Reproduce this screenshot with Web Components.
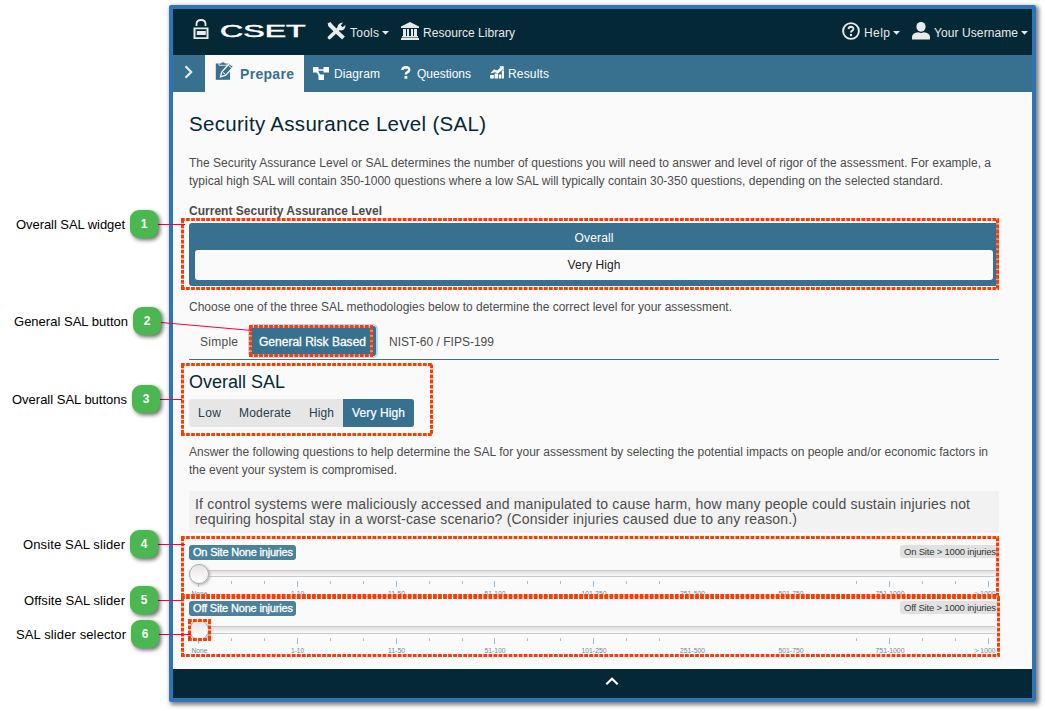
<!DOCTYPE html>
<html lang="en">
<head>
<meta charset="utf-8">
<title>Security Assurance Level</title>
<style>
html,body{margin:0;padding:0;background:#fff;overflow:hidden}
body{width:1045px;height:711px;position:relative;font:12px/18px "Liberation Sans",Arial,sans-serif;color:#4c4c4c}
</style>
</head>
<body>
<help-figure></help-figure>
<script>
const define=(name,html,ready)=>customElements.define(name,class extends HTMLElement{
  constructor(){
    super();
    const t=document.createElement('template');
    t.innerHTML=html;
    this.attachShadow({mode:'open'}).append(t.content.cloneNode(true));
  }
  connectedCallback(){if(ready)ready(this,this.shadowRoot)}
});

/* One line of text, tracked to a given width (w). */
define('fit-text',`<style>:host{display:inline-block;white-space:nowrap;flex:none}span{display:inline-block}</style><span><slot></slot></span>`,(el,root)=>{
  const w=+el.getAttribute('w'),s=root.querySelector('span');
  const n=el.textContent.length-1;
  el.style.width=w+'px';
  if(n>0)s.style.letterSpacing=((w-s.getBoundingClientRect().width)/n)+'px';
});

const icons={
lock:[16,21,`<path d="M3.500 7V5Q3.500 1 8 1T12.500 5V7" fill="none" stroke="currentColor" stroke-width="1.800"/><path fill-rule="evenodd" d="M.5 8.500H15.500V20H.5ZM2.500 10.300V18.200H13.500V10.300Z" fill="currentColor"/><path d="M3.800 12H12.800V16H3.800Z" fill="currentColor"/>`],
tools:[19,18,`<path d="M3 3L9 9" stroke="currentColor" stroke-width="4" stroke-linecap="round"/><path d="M.5 1.500L3.500 0 6 4 3 5.500Z" fill="currentColor"/><path d="M10 10L16.500 16" stroke="currentColor" stroke-width="4"/><path d="M2.500 15.500L13 5.500" stroke="currentColor" stroke-width="3.600" stroke-linecap="round"/><path d="M16 .6L13.800 3.600 15.400 5.200 18.400 3Q18.600 8 14.200 8.400 10.800 8 10.400 5.500 10.800 1 16 .6Z" fill="currentColor"/>`],
museum:[18,18,`<path d="M9 0L18 4.500V6H0V4.500ZM2 7H5V14H2ZM6 7H8V14H6ZM10 7H12V14H10ZM13 7H16V14H13ZM1 14H17V15.500H1ZM0 16H18V18H0Z" fill="currentColor"/>`],
help:[18,18,`<circle cx="9" cy="9" r="7.900" fill="none" stroke="currentColor" stroke-width="1.900"/><path d="M6.500 7Q6.800 4.800 9 4.800 11.500 4.900 11.400 7 11.300 8.100 10 8.800 9 9.300 9 10.600" fill="none" stroke="currentColor" stroke-width="1.900"/><circle cx="9" cy="13" r="1.200" fill="currentColor"/>`],
user:[18,18,`<ellipse cx="9" cy="4.800" rx="4.600" ry="4.900" fill="currentColor"/><path d="M0 17.500V15Q0 11 6.500 10.300 9 11.800 11.500 10.300 18 11 18 15V17.500Z" fill="currentColor"/>`],
caret:[7,4,`<path d="M0 0H7L3.500 3.700Z" fill="currentColor"/>`],
right:[9,14,`<path d="M1.500 1.300L7.200 7 1.500 12.700" fill="none" stroke="currentColor" stroke-width="2.200"/>`],
up:[14,9,`<path d="M1.300 7.300L7 1.800 12.700 7.300" fill="none" stroke="currentColor" stroke-width="2.200"/>`],
prepare:[20,20,`<path d="M.8 2.500H15V18.800H.8Z" fill="currentColor"/><path d="M4 4.300V2H6Q8 -.5 10 2H12V4.300Z" fill="currentColor" stroke="#fafafa" stroke-width=".8"/><path d="M5.500 15.800L6.700 11 14.500 2.500 18.500 5.600 10.800 14.200Z" fill="currentColor" stroke="#fafafa" stroke-width="1.300"/><path d="M7.800 11.300L10.400 13.400M13.200 4L16.800 7.200" stroke="#fafafa" stroke-width="1"/>`],
diagram:[16,14,`<path d="M3 3H13M3 3L8.500 11" stroke="currentColor" stroke-width="1.700"/><path d="M0 0H5.500V5.500H0ZM10.500 0H16V5.500H10.500ZM5.500 7.500H11V13H5.500Z" fill="currentColor"/>`],
question:[10,13,`<path d="M1.300 4Q1.500 1.200 4.900 1.200 8.400 1.300 8.200 4 8 5.600 6.200 6.300 4.900 7 4.900 8.500" fill="none" stroke="currentColor" stroke-width="2.400"/><path d="M3.500 10H6.300V12.700H3.500Z" fill="currentColor"/>`],
results:[15,13,`<path d="M0 9H3.800V12.500H0ZM4.600 7.500H8V12.500H4.600ZM8.800 8.500H11.200V12.500H8.800ZM11.800 4.500H14V12.500H11.800Z" fill="currentColor"/><path d="M.3 7.500L4 3.200 7.200 4.500 10.500 1.500 9.500 .3H13.800V4.500L12.500 3.500 8 7.600 5 6.300Z" fill="currentColor"/>`]
};
define('ui-icon',`<style>:host{display:block;flex:none}svg{display:block}</style><div></div>`,(el,root)=>{
  const [w,h,p]=icons[el.getAttribute('name')];
  root.querySelector('div').innerHTML=`<svg width="${w}" height="${h}" viewBox="0 0 ${w} ${h}">${p}</svg>`;
});

define('top-bar',`<style>
:host{display:flex;height:46px;background:#052837;color:#e9eaea;box-sizing:border-box;padding:0 4px 0 20px;align-items:flex-start}
ui-icon{margin-top:13px}
fit-text{margin-top:15px}
.caret{margin-top:22px}
.brand{width:87px;height:14px;margin:16px 21px 0 11px;overflow:visible}
.brand span{display:block;font:400 17px/14px "Liberation Sans",sans-serif;transform-origin:0 50%;transform:scaleX(1.89);width:46px;color:#fff;-webkit-text-stroke:.5px #fff}
.gap{flex:1}
</style>
<ui-icon name="lock" style="margin-top:10px"></ui-icon><div class="brand"><span>CSET</span></div>
<ui-icon name="tools" style="margin-left:-1px"></ui-icon><fit-text w="29" style="margin-left:4px">Tools</fit-text><ui-icon class="caret" name="caret" style="margin-left:3px"></ui-icon>
<ui-icon name="museum" style="margin-left:12px"></ui-icon><fit-text w="92" style="margin-left:4px">Resource Library</fit-text>
<div class="gap"></div>
<ui-icon name="help"></ui-icon><fit-text w="26" style="margin-left:4px">Help</fit-text><ui-icon class="caret" name="caret" style="margin-left:3px"></ui-icon>
<ui-icon name="user" style="margin-left:12px"></ui-icon><fit-text w="84" style="margin-left:4px">Your Username</fit-text><ui-icon class="caret" name="caret" style="margin-left:3px"></ui-icon>`);

define('nav-bar',`<style>
:host{display:flex;height:37px;background:#38718f;color:#fff;align-items:flex-start}
fit-text{margin-top:10px}
.tab{display:flex;width:99px;height:37px;background:#fafafa;color:#38718f;font-weight:700;font-size:14px}
</style>
<ui-icon name="right" style="margin:10px 12px 0 11px;color:#e9eaea"></ui-icon>
<div class="tab"><ui-icon name="prepare" style="margin:6px 5px 0 10px"></ui-icon><fit-text w="54">Prepare</fit-text></div>
<ui-icon name="diagram" style="margin:12px 5px 0 9px"></ui-icon><fit-text w="46">Diagram</fit-text>
<ui-icon name="question" style="margin:11px 6px 0 21px"></ui-icon><fit-text w="54">Questions</fit-text>
<ui-icon name="results" style="margin:11px 3px 0 19px"></ui-icon><fit-text w="41">Results</fit-text>`);

define('sal-summary',`<style>
:host{display:block;box-sizing:border-box;height:63px;background:#38718f;border-radius:3px;padding:6px;color:#fff;text-align:center}
.value{margin-top:3px;height:30px;line-height:30px;background:#fafafa;border-radius:3px;color:#222}
.name{height:18px}
</style><div class="name"><fit-text w="39">Overall</fit-text></div><div class="value"><slot></slot></div>`);

define('method-tabs',`<style>
:host{display:flex;height:34px;border-bottom:1px solid #38718f;box-sizing:border-box;line-height:32px}
.on{background:#38718f;color:#fff;border-radius:3px;box-shadow:0 0 0 2px #b3d7ff;height:30px;width:126px;box-sizing:border-box;padding-left:9px;margin:0 13px 0 12px;-webkit-text-stroke:.3px #fff}
</style><fit-text w="38" style="margin-left:11px">Simple</fit-text><div class="on"><fit-text w="107">General Risk Based</fit-text></div><fit-text w="105">NIST-60 / FIPS-199</fit-text>`);

define('level-buttons',`<style>
:host{display:flex;width:225px;height:28px;line-height:28px;border-radius:3px;overflow:hidden;background:#e6e6e6;color:#24404e}
.on{background:#38718f;color:#fff;width:71px;box-sizing:border-box;padding-left:9px;margin-left:9px;-webkit-text-stroke:.2px #fff}
</style><fit-text w="23" style="margin-left:9px">Low</fit-text><fit-text w="52" style="margin-left:18px">Moderate</fit-text><fit-text w="25" style="margin-left:18px">High</fit-text><div class="on"><fit-text w="53">Very High</fit-text></div>`);

define('injury-slider',`<style>
:host{display:block;height:56px;position:relative;width:810px}
.tags{display:flex;justify-content:space-between;height:16px;align-items:flex-start}
.now{background:#4a819b;color:#fff;border-radius:3px;height:15px;line-height:15px;width:107px;box-sizing:border-box;padding-left:4px;font-size:11px;-webkit-text-stroke:.3px #fff}
.max{background:#e1e1e1;color:#333;border-radius:3px;height:13px;line-height:13px;width:99px;box-sizing:border-box;padding-left:4px;font-size:9.500px}
.track{height:7px;width:807px;box-sizing:border-box;margin-top:9px;border:1px solid #c8c8c8;border-width:1px 0;border-radius:2px;background:linear-gradient(#dedede,#fafafa)}
:host([tall]) .track{height:8px}
.knob{position:absolute;left:0;top:19px;width:20px;height:20px;box-sizing:border-box;border:1px solid #aaa;border-radius:50%;background:linear-gradient(#e4e4e4,#fff);box-shadow:1px 1px 3px #aaa}
svg{display:block;height:28px;width:810px;overflow:visible;margin-top:-7px}
svg text{font-size:6.500px;text-anchor:middle;fill:#78868e}
</style><div class="tags"><div class="now"></div><div class="max"></div></div><div class="track"></div><svg></svg><div class="knob"></div>`,(el,root)=>{
  const site=el.getAttribute('site');
  root.querySelector('.now').innerHTML=`<fit-text w="100">${site} None injuries</fit-text>`;
  root.querySelector('.max').innerHTML=`<fit-text w="92">${site} &gt; 1000 injuries</fit-text>`;
  const major=[9,108,207,305,404,700,799].map(x=>`<rect x="${x}" y="11" width="1" height="6" fill="#99bfe0"/>`).join('');
  const minor=[42,75,141,174,240,273,338,371,437,470,667,733,766].map(x=>`<rect x="${x}" y="11" width="1" height="3" fill="#bbb"/>`).join('');
  const names=[['None',10.500,16],['1-10',108.500,13],['11-50',207.500,17],['51-100',306,21],['101-250',405,25],['251-500',503.500,25],['501-750',602,25],['751-1000',701,29],['> 1000',796,21]];
  root.querySelector('svg').innerHTML=major+minor+names.map(([s,x,w])=>`<text x="${x}" y="26" textLength="${w}" lengthAdjust="spacingAndGlyphs">${s.replace('>','&gt;')}</text>`).join('');
});

define('sal-form',`<style>
:host{display:block;height:577px;box-sizing:border-box;background:#fafafa;padding:19px 33px 0 16px}
fit-text{display:block}
sal-summary fit-text{display:inline-block}
h1,h2,p{margin:0;font-weight:400}
h1{font-size:20.500px;line-height:26px;color:#052837}
h2{font-size:18px;line-height:22px;color:#052837;margin:11px 0 6px}
.question{height:42px;box-sizing:border-box;padding:6px;background:#f2f2f2;font-size:14px;line-height:15px;margin-top:12px;margin-bottom:12px}
</style>
<h1><fit-text w="297">Security Assurance Level (SAL)</fit-text></h1>
<p style="margin-top:17px"><fit-text w="802">The Security Assurance Level or SAL determines the number of questions you will need to answer and level of rigor of the assessment. For example, a</fit-text><fit-text w="754">typical high SAL will contain 350-1000 questions where a low SAL will typically contain 30-350 questions, depending on the selected standard.</fit-text></p>
<p style="font-weight:700;margin:12px 0 3px"><fit-text w="193">Current Security Assurance Level</fit-text></p>
<sal-summary><fit-text w="53">Very High</fit-text></sal-summary>
<p style="margin:12px 0 10px"><fit-text w="543">Choose one of the three SAL methodologies below to determine the correct level for your assessment.</fit-text></p>
<method-tabs></method-tabs>
<h2><fit-text w="96">Overall SAL</fit-text></h2>
<level-buttons></level-buttons>
<p style="margin-top:16px"><fit-text w="799">Answer the following questions to help determine the SAL for your assessment by selecting the potential impacts on people and/or economic factors in</fit-text><fit-text w="208">the event your system is compromised.</fit-text></p>
<div class="question"><fit-text w="775">If control systems were maliciously accessed and manipulated to cause harm, how many people could sustain injuries not</fit-text><fit-text w="602">requiring hospital stay in a worst-case scenario? (Consider injuries caused due to any reason.)</fit-text></div>
<injury-slider site="On Site"></injury-slider>
<injury-slider site="Off Site" tall></injury-slider>`);

define('app-window',`<style>
:host{display:block;box-sizing:border-box;width:867px;height:697px;border:4px solid #2f75b5;border-radius:2px;box-shadow:2px 2px 4px 1px rgba(0,0,0,.5)}
footer{height:29px;background:#052837;color:#fff;display:flex;justify-content:center;padding:0 0 0 19px;box-sizing:border-box}
ui-icon{margin-top:8px}
</style><top-bar></top-bar><nav-bar></nav-bar><sal-form></sal-form><footer><ui-icon name="up"></ui-icon></footer>`);

define('call-out',`<style>
:host{position:absolute;display:flex;align-items:center;justify-content:flex-end;height:28px;left:0;color:#000;font-size:13px;gap:5px}
b{width:28px;height:28px;border-radius:9px;background:#4bb750;color:#fff;text-align:center;line-height:29px;font-size:12px;box-shadow:2px 2px 4px rgba(0,0,0,.6)}
::slotted(fit-text){padding-top:2px}
</style><slot></slot><b></b>`,(el,root)=>{
  root.querySelector('b').textContent=el.getAttribute('n');
  el.style.top=el.getAttribute('y')+'px';
  el.style.width=el.getAttribute('end')+'px';
});

define('note-layer',`<style>
:host{position:absolute;left:0;top:0;width:1045px;height:711px}
svg{position:absolute;left:0;top:0}
</style><svg width="1045" height="711"></svg>
<call-out n="1" y="210" end="158"><fit-text w="109">Overall SAL widget</fit-text></call-out>
<call-out n="2" y="307" end="161"><fit-text w="114">General SAL button</fit-text></call-out>
<call-out n="3" y="385" end="160"><fit-text w="115">Overall SAL buttons</fit-text></call-out>
<call-out n="4" y="530" end="158"><fit-text w="102">Onsite SAL slider</fit-text></call-out>
<call-out n="5" y="586" end="158"><fit-text w="101">Offsite SAL slider</fit-text></call-out>
<call-out n="6" y="620" end="159"><fit-text w="110">SAL slider selector</fit-text></call-out>`,(el,root)=>{
  const boxes=[[182.500,219.500,997.500,288.500],[250.500,326.500,371.500,355.500],[182.500,364.500,431.500,434.500],[182.500,537.500,997.500,595.500],[182.500,597.500,998.500,655.500],[189.500,620.500,209.500,639.500]];
  const lines=[[158,224.500,185,224.500],[161,322.500,252,330.500],[160,399.500,182,399.500],[158,544.500,185,544.500],[158,600.500,183,600.500],[159,634.500,191,634.500]];
  root.querySelector('svg').innerHTML=
    boxes.map(([a,b,c,d])=>`<path d="M${a-1.5} ${b}H${c+1.5}M${a-1.5} ${d}H${c+1.5}M${a} ${b}V${d}M${c} ${b}V${d}" stroke="#fff" stroke-opacity=".55" stroke-width="3"/><path d="M${a-1.5} ${b}H${c+1.5}M${a-1.5} ${d}H${c+1.5}M${a} ${b}V${d}M${c} ${b}V${d}" stroke="#ff3c00" stroke-width="3" stroke-dasharray="3.800 1.240"/>`).join('')+
    lines.map(([a,b,c,d])=>`<path d="M${a} ${b}L${c} ${d}" stroke="#f90044"/>`).join('');
});

define('help-figure',`<style>
:host{display:block;box-sizing:border-box;width:1045px;height:711px;padding:5px 0 0 169px;position:relative}
</style><app-window></app-window><note-layer></note-layer>`);
</script>
</body>
</html>
